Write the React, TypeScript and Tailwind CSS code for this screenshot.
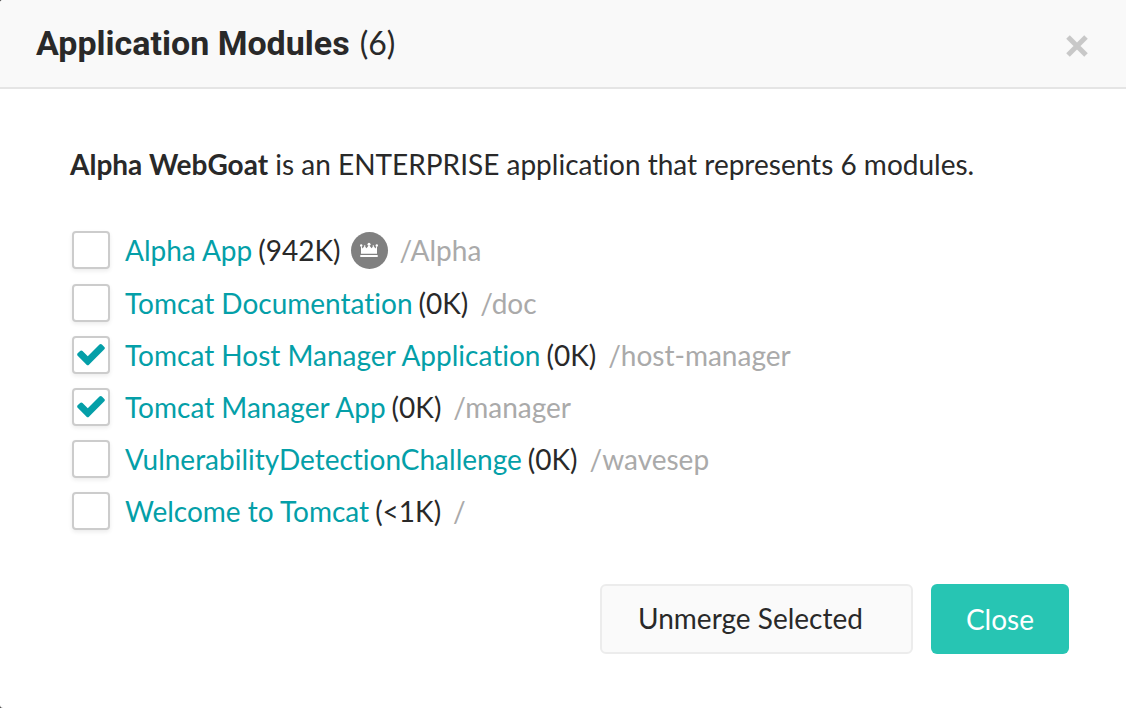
import { useState } from "react";

type Module = { id: string; name: string; size: string; path: string; primary?: boolean };

const modules: Module[] = [
  { id: "alpha", name: "Alpha App", size: "(942K)", path: "/Alpha", primary: true },
  { id: "doc", name: "Tomcat Documentation", size: "(0K)", path: "/doc" },
  { id: "host", name: "Tomcat Host Manager Application", size: "(0K)", path: "/host-manager" },
  { id: "manager", name: "Tomcat Manager App", size: "(0K)", path: "/manager" },
  { id: "wavesep", name: "VulnerabilityDetectionChallenge", size: "(0K)", path: "/wavesep" },
  { id: "root", name: "Welcome to Tomcat", size: "(<1K)", path: "/" },
];

function Crown() {
  return (
    <span className="ml-2.5 flex size-[37px] shrink-0 items-center justify-center rounded-full bg-[#808080]">
      <svg viewBox="0 0 20 18" className="h-[18px] w-5 fill-white" aria-hidden="true">
        <path d="M2 4.500 3.600 7.500 5.500 5 7.500 7.300 10 4 12.500 7.300 14.500 5 16.400 7.500 18 4.500V12.800H2z" />
        <circle cx="2.200" cy="4.500" r="1.200" />
        <circle cx="5.700" cy="5" r="0.800" />
        <circle cx="10" cy="3.200" r="1.500" />
        <circle cx="14.300" cy="5" r="0.800" />
        <circle cx="17.800" cy="4.500" r="1.200" />
        <path d="M1.300 14h17.400v2h-17.400z" />
      </svg>
    </span>
  );
}

function ModuleRow({ module, checked, onToggle }: { module: Module; checked: boolean; onToggle: () => void }) {
  return (
    <li className={module.primary ? "flex h-[54px] items-center" : "flex h-[52px] items-center"}>
      <span className="relative mr-[15px] flex size-[38px] shrink-0">
        <input
          id={module.id}
          type="checkbox"
          aria-label={module.name}
          checked={checked}
          onChange={onToggle}
          className="size-full appearance-none rounded-sm border-2 border-[#cccccc] bg-white shadow-[0_2px_4px_rgba(0,0,0,0.08)]"
        />
        {checked && (
          <span className="pointer-events-none absolute inset-0 flex items-center justify-center pb-0.5">
            <svg viewBox="0 0 1792 1792" className="size-8 fill-[#049fa8]" aria-hidden="true">
              <path d="M1671 566q0 40-28 68l-724 724-136 136q-28 28-68 28t-68-28l-136-136-362-362q-28-28-28-68t28-68l136-136q28-28 68-28t68 28l294 295 656-657q28-28 68-28t68 28l136 136q28 28 28 68z" />
            </svg>
          </span>
        )}
      </span>
      <a href={"#" + module.id} className="text-[#049fa8]">{module.name}</a>
      <span className="ml-1.5">{module.size}</span>
      {module.primary && <Crown />}
      <span className="ml-3 text-[#aaaaaa]">{module.path}</span>
    </li>
  );
}

export default function App() {
  const [selected, setSelected] = useState<string[]>(["host", "manager"]);
  const toggle = (id: string) =>
    setSelected((s) => (s.includes(id) ? s.filter((x) => x !== id) : [...s, id]));

  return (
    <div className="bg-[#444444]">
      <section className="min-h-screen overflow-hidden rounded-l-[3px] bg-white font-[Lato,sans-serif] text-[28px] leading-9 text-[#292929] [font-variant-ligatures:none]">
        <header className="flex h-[89px] items-center justify-between border-b-2 border-[#e5e5e5] bg-[#f9f9f9] px-9">
          <h1 className="flex items-baseline gap-2.5 pb-0.5 font-[Roboto,sans-serif] text-[34px] font-bold">
            Application Modules <span className="font-[Lato,sans-serif] text-[32px] font-normal">(6)</span>
          </h1>
          <button type="button" aria-label="Close dialog" className="flex pt-1">
            <svg viewBox="0 0 26 26" className="size-[26px]" aria-hidden="true">
              <path d="M4 4 22 22M22 4 4 22" fill="none" stroke="#c8c8c8" strokeWidth="5" />
            </svg>
          </button>
        </header>
        <main className="px-[70px] pt-[57px]">
          <p><strong>Alpha WebGoat</strong> is an ENTERPRISE application that represents 6 modules.</p>
          <ul className="mt-[41px] pl-0.5">
            {modules.map((m) => (
              <ModuleRow key={m.id} module={m} checked={selected.includes(m.id)} onToggle={() => toggle(m.id)} />
            ))}
          </ul>
        </main>
        <footer className="mt-[47px] flex justify-end gap-[18px] pr-[57px]">
          <button type="button" className="h-[70px] rounded-md border-2 border-[#ececec] bg-[#fafafa] pr-12 pb-0.5 pl-9">
            Unmerge Selected
          </button>
          <button type="button" className="h-[70px] rounded-md bg-[#27c5b3] px-[35px] text-white">Close</button>
        </footer>
      </section>
    </div>
  );
}
